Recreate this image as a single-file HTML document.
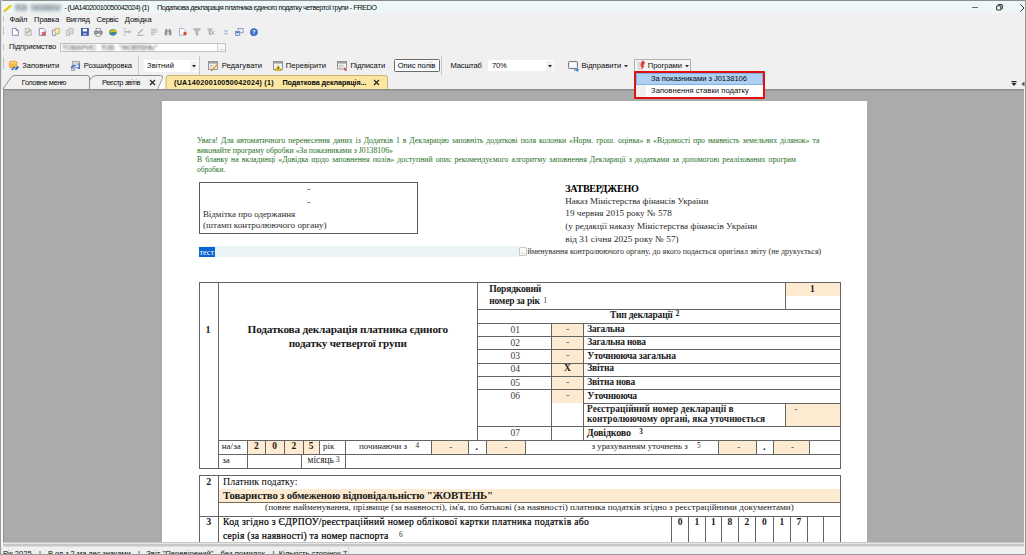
<!DOCTYPE html>
<html><head><meta charset="utf-8">
<style>
html,body{margin:0;padding:0;}
body{width:1026px;height:555px;overflow:hidden;position:relative;background:#f0f0f0;font-family:"Liberation Sans",sans-serif;color:#1e1e1e;}
.a{position:absolute;white-space:nowrap;}
.blur{filter:blur(1.4px);}
svg{position:absolute;overflow:visible}
</style></head>
<body>
<div class="a" style="left:0px;top:0px;width:1026px;height:555px;background:#f0f0f0"></div>
<div class="a" style="left:0px;top:0px;width:1026px;height:13px;background:#eef7f7"></div>
<div class="a" style="left:0px;top:0px;width:1026px;height:1px;background:#8c8c8c"></div>
<svg style="left:2px;top:2px" width="10" height="10" viewBox="0 0 10 10"><path d="M1.8 8.2 L8 2.8 L10 4 L3.8 9.6 Z" fill="#f0c808"/><path d="M1.6 9.9 L1.8 8.2 L3.8 9.6 Z" fill="#e0b000"/></svg>
<div class="a" style="left:14px;top:3.5px;width:13px;height:8px;background:#c8d2d6;border-radius:3px;filter:blur(1.4px)"></div>
<div class="a" style="left:30px;top:3.5px;width:31px;height:8px;background:#c8d2d6;border-radius:3px;filter:blur(1.4px)"></div>
<div class="a " style="left:15.00px;top:4.00px;font-family:'Liberation Sans',sans-serif;font-weight:bold;font-size:7.4px;line-height:7.4px;color:#9aa2a8;letter-spacing:-1.479px;filter:blur(1.1px);">ТОВ</div>
<div class="a " style="left:31.00px;top:4.00px;font-family:'Liberation Sans',sans-serif;font-weight:bold;font-size:7.4px;line-height:7.4px;color:#9aa2a8;letter-spacing:-1.727px;filter:blur(1.1px);">&quot;ЖОВТЕНЬ&quot;</div>
<div class="a " style="left:64.30px;top:4.00px;font-family:'Liberation Sans',sans-serif;font-weight:normal;font-size:7.4px;line-height:7.4px;color:#0a0a0a;letter-spacing:-0.596px;">- (UA14020010050042024) (1)</div>
<div class="a " style="left:157.00px;top:4.00px;font-family:'Liberation Sans',sans-serif;font-weight:normal;font-size:7.4px;line-height:7.4px;color:#0a0a0a;letter-spacing:-0.520px;">Податкова декларація платника єдиного податку четвертої групи - FREDO</div>
<div class="a" style="left:972px;top:6.5px;width:6px;height:1.2px;background:#6a6a6a"></div>
<svg style="left:996px;top:4px" width="7" height="7" viewBox="0 0 7 7"><rect x="0.6" y="1.8" width="4.2" height="4.2" rx="1" fill="none" stroke="#3a3a3a" stroke-width="1.1"/><path d="M2 1.6 Q2 0.6 3 0.6 H5.4 Q6.4 0.6 6.4 1.6 V4 Q6.4 5 5.4 5" fill="none" stroke="#3a3a3a" stroke-width="1.1"/></svg>
<svg style="left:1019px;top:3px" width="8" height="8" viewBox="0 0 8 8"><path d="M1.5 1.5 L5 5 L1.5 8.5" stroke="#333" stroke-width="1" fill="none"/></svg>
<div class="a" style="left:3px;top:16px;width:1px;height:6px;background:#c4c4c4"></div>
<div class="a " style="left:9.40px;top:16.00px;font-family:'Liberation Sans',sans-serif;font-weight:normal;font-size:7.6px;line-height:7.6px;color:#0a0a0a;letter-spacing:-0.196px;">Файл</div>
<div class="a " style="left:34.10px;top:16.00px;font-family:'Liberation Sans',sans-serif;font-weight:normal;font-size:7.6px;line-height:7.6px;color:#0a0a0a;letter-spacing:-0.129px;">Правка</div>
<div class="a " style="left:65.90px;top:16.00px;font-family:'Liberation Sans',sans-serif;font-weight:normal;font-size:7.6px;line-height:7.6px;color:#0a0a0a;letter-spacing:-0.184px;">Вигляд</div>
<div class="a " style="left:96.50px;top:16.00px;font-family:'Liberation Sans',sans-serif;font-weight:normal;font-size:7.6px;line-height:7.6px;color:#0a0a0a;letter-spacing:-0.278px;">Сервіс</div>
<div class="a " style="left:124.80px;top:16.00px;font-family:'Liberation Sans',sans-serif;font-weight:normal;font-size:7.6px;line-height:7.6px;color:#0a0a0a;letter-spacing:-0.063px;">Довідка</div>
<div class="a" style="left:3px;top:26px;width:1px;height:9px;background:#c4c4c4"></div>
<svg style="left:10.5px;top:27.5px" width="10" height="10" viewBox="0 0 10 10"><g transform="scale(0.86)" opacity="0.9"><path d="M1.5 0.5 H6 L8.5 3 V8.5 H1.5 Z" fill="#fff" stroke="#5d74a6"/><path d="M6 0.5 V3 H8.5" fill="#dfe6f2" stroke="#5d74a6"/></g></svg>
<svg style="left:23.5px;top:27.5px" width="10" height="10" viewBox="0 0 10 10"><g transform="scale(0.86)" opacity="0.9"><path d="M1.5 0.5 H6 L8.5 3 V8.5 H1.5 Z" fill="#e8e8e8" stroke="#a8a8a8"/><path d="M3 6 L8 1.5" stroke="#9a9a9a" stroke-width="1.5"/></g></svg>
<svg style="left:37.5px;top:27.5px" width="10" height="10" viewBox="0 0 10 10"><g transform="scale(0.86)" opacity="0.9"><path d="M1.5 0.5 H6 L8.5 3 V8.5 H1.5 Z" fill="#fff" stroke="#5d74a6"/><path d="M4.5 4.5 L8.5 8.5 M8.5 4.5 L4.5 8.5" stroke="#e02020" stroke-width="1.4"/></g></svg>
<svg style="left:51.5px;top:27.5px" width="10" height="10" viewBox="0 0 10 10"><g transform="scale(0.86)" opacity="0.9"><path d="M0.5 2.5 H4.5 V8.5 H0.5 Z" fill="#fff" stroke="#5d74a6"/><path d="M3.5 0.5 H8.5 V6.5 H3.5 Z" fill="#f7eab0" stroke="#b8a050"/></g></svg>
<svg style="left:65.5px;top:27.5px" width="10" height="10" viewBox="0 0 10 10"><g transform="scale(0.86)" opacity="0.9"><path d="M0.5 2.5 H4.5 V8.5 H0.5 Z" fill="#e6e6e6" stroke="#b0b0b0"/><path d="M3.5 0.5 H8.5 V6.5 H3.5 Z" fill="#dadada" stroke="#b0b0b0"/></g></svg>
<svg style="left:80.5px;top:27.5px" width="10" height="10" viewBox="0 0 10 10"><g transform="scale(0.86)" opacity="0.9"><rect x="0.5" y="0.5" width="8" height="8" fill="#2b4fb0" stroke="#1e3a8a"/><rect x="2" y="1" width="5" height="3" fill="#fff"/><rect x="2.5" y="6" width="4" height="2.5" fill="#9fb4e0"/></g></svg>
<svg style="left:93.5px;top:27.5px" width="10" height="10" viewBox="0 0 10 10"><g transform="scale(0.86)" opacity="0.9"><rect x="0.5" y="3.5" width="9" height="4" rx="1" fill="#8f9296" stroke="#6d7074"/><rect x="2.5" y="0.5" width="5" height="3" fill="#fff" stroke="#8a8a8a"/><rect x="2.5" y="6.5" width="5" height="3" fill="#fff" stroke="#8a8a8a"/></g></svg>
<svg style="left:108.5px;top:27.5px" width="10" height="10" viewBox="0 0 10 10"><g transform="scale(0.86)" opacity="0.9"><ellipse cx="4.5" cy="5" rx="4.5" ry="3.6" fill="#2a8a3a"/><path d="M0.8 4 Q4 1 8.5 3 L8 5 Q4 3.5 1 6 Z" fill="#f2c200"/><ellipse cx="4.5" cy="7" rx="3.5" ry="1.6" fill="#2d6fd0"/></g></svg>
<svg style="left:122.5px;top:27.5px" width="10" height="10" viewBox="0 0 10 10"><g transform="scale(0.86)" opacity="0.9"><path d="M1 1 H3 M1 4.5 H3 M1 8 H3 M3 4.5 H9" stroke="#a6a6a6" stroke-width="1.2"/><rect x="6" y="3" width="3" height="3" fill="#b6b6b6"/></g></svg>
<svg style="left:135.5px;top:27.5px" width="10" height="10" viewBox="0 0 10 10"><g transform="scale(0.86)" opacity="0.9"><path d="M1 8.5 H8.5" stroke="#a0a0a0" stroke-width="1.2"/><path d="M2.5 6.5 L8 1.5" stroke="#a8a8a8" stroke-width="1.6"/></g></svg>
<svg style="left:149.5px;top:27.5px" width="10" height="10" viewBox="0 0 10 10"><g transform="scale(0.86)" opacity="0.9"><path d="M1 1.5 H7 M1 3.5 H6 M1 5.5 H7 M1 7.5 H5" stroke="#ababab" stroke-width="1.1"/><path d="M6.5 3 L9 1 M6.5 3 L9 5" stroke="#a6a6a6" stroke-width="0.9"/></g></svg>
<svg style="left:163.5px;top:27.5px" width="10" height="10" viewBox="0 0 10 10"><g transform="scale(0.86)" opacity="0.9"><path d="M1 3 L2.5 0.8 H3.8 V8.5 H0.6 Z M8.4 3 L6.9 0.8 H5.6 V8.5 H8.8 Z" fill="#8a8a8a"/><rect x="3.5" y="3" width="2.4" height="2" fill="#9a9a9a"/></g></svg>
<svg style="left:178.5px;top:27.5px" width="10" height="10" viewBox="0 0 10 10"><g transform="scale(0.86)" opacity="0.9"><path d="M0.5 0.5 H5 L7.5 3 V8.5 H0.5 Z" fill="#fff" stroke="#8da0c0"/><circle cx="7" cy="6.5" r="2" fill="#e03020"/></g></svg>
<svg style="left:192.5px;top:27.5px" width="10" height="10" viewBox="0 0 10 10"><g transform="scale(0.86)" opacity="0.9"><path d="M0.5 1 H8.5 L5.5 4.5 V8.5 L3.5 7.5 V4.5 Z" fill="#bcbcbc" stroke="#8f8f8f" stroke-width="0.8"/></g></svg>
<svg style="left:206.5px;top:27.5px" width="10" height="10" viewBox="0 0 10 10"><g transform="scale(0.86)" opacity="0.9"><path d="M0.5 1 H6 L4 4 V8 L2.5 7 V4 Z" fill="#c4c4c4" stroke="#9a9a9a" stroke-width="0.8"/><path d="M5 3 L8.5 8 M8.5 3 L5 8" stroke="#9a9a9a" stroke-width="1"/></g></svg>
<svg style="left:221.5px;top:27.5px" width="10" height="10" viewBox="0 0 10 10"><g transform="scale(0.86)" opacity="0.9"><path d="M2.5 2.5 L4.5 4.5 L6.5 2.5 M2.5 5.5 L4.5 7.5 L6.5 5.5" fill="none" stroke="#5a80c8" stroke-width="1"/></g></svg>
<svg style="left:234.5px;top:27.5px" width="10" height="10" viewBox="0 0 10 10"><g transform="scale(0.86)" opacity="0.9"><rect x="3.5" y="0.5" width="6" height="5" fill="#e8eef6" stroke="#6f86b0" stroke-width="0.9"/><rect x="0.5" y="4" width="5" height="4.5" fill="#cfdcf0" stroke="#5a76b0" stroke-width="0.9"/><rect x="1.2" y="4.6" width="3.6" height="1.2" fill="#3a6fc8"/></g></svg>
<svg style="left:249.5px;top:27.5px" width="10" height="10" viewBox="0 0 10 10"><g transform="scale(0.86)" opacity="0.9"><circle cx="4.5" cy="4.8" r="4.2" fill="#2a64c8"/><circle cx="4.5" cy="4.8" r="4.2" fill="none" stroke="#1c4aa0" stroke-width="0.6"/><text x="4.5" y="7.3" font-size="6.5" font-weight="bold" text-anchor="middle" fill="#fff" font-family="Liberation Sans">?</text></g></svg>
<div class="a" style="left:3px;top:44px;width:1px;height:6px;background:#c4c4c4"></div>
<div class="a " style="left:8.90px;top:43.00px;font-family:'Liberation Sans',sans-serif;font-weight:normal;font-size:7.6px;line-height:7.6px;color:#0a0a0a;letter-spacing:-0.128px;">Підприємство</div>
<div class="a" style="left:60px;top:43px;width:166px;height:9px;background:#fff;border:1px solid #c3c3c3;box-sizing:border-box"></div>
<div class="a " style="left:62.00px;top:44.00px;font-family:'Liberation Sans',sans-serif;font-weight:bold;font-size:7.6px;line-height:7.6px;color:#8a8a8a;letter-spacing:-0.426px;filter:blur(0.9px);">ТОВАРИС</div>
<div class="a " style="left:100.50px;top:44.00px;font-family:'Liberation Sans',sans-serif;font-weight:bold;font-size:7.6px;line-height:7.6px;color:#8a8a8a;letter-spacing:-0.851px;filter:blur(0.9px);">ТОВ</div>
<div class="a " style="left:118.50px;top:44.00px;font-family:'Liberation Sans',sans-serif;font-weight:bold;font-size:7.6px;line-height:7.6px;color:#8a8a8a;letter-spacing:-0.828px;filter:blur(0.9px);">&quot;ЖОВТЕНЬ&quot;</div>
<div class="a" style="left:217px;top:44px;width:8px;height:7px;background:#f7f7f7;border-left:1px solid #d0d0d0;box-sizing:border-box"></div>
<div class="a " style="left:219.00px;top:45.00px;font-family:'Liberation Sans',sans-serif;font-weight:normal;font-size:6px;line-height:6px;color:#555;">...</div>
<div class="a" style="left:3px;top:57px;width:1px;height:12px;background:#c4c4c4"></div>
<svg style="left:8px;top:60px" width="12" height="12" viewBox="0 0 12 12"><rect x="1.3" y="1.3" width="7.6" height="6.4" rx="1.2" fill="#f4b841" stroke="#ec9a2c" stroke-width="0.7"/><rect x="2" y="2" width="6" height="1.4" fill="#f9d880"/><path d="M3 9.5 L6.2 6.2 L7.4 7.2 L4.6 10.6 Z" fill="#2f7fd8"/><path d="M6.8 9.2 L9.6 6 L11.2 7 L8.2 10.2 Z" fill="#1f62b8"/></svg>
<div class="a " style="left:22.20px;top:62.00px;font-family:'Liberation Sans',sans-serif;font-weight:normal;font-size:7.6px;line-height:7.6px;color:#0a0a0a;letter-spacing:-0.030px;">Заповнити</div>
<svg style="left:70px;top:60px" width="12" height="12" viewBox="0 0 12 12"><rect x="2.3" y="1.3" width="7.4" height="6" fill="#d6d6d6" stroke="#8e8e8e" stroke-width="0.7"/><path d="M1.5 7.8 Q1.8 5.2 5.6 5.6" stroke="#3d72d8" stroke-width="1.5" fill="none"/><path d="M8.3 3.3 Q10 4.8 9.4 8.3 L7.4 8.3" stroke="#3d72d8" stroke-width="1.3" fill="none"/><rect x="1.4" y="8.2" width="3.6" height="2.4" fill="#c4cad4" stroke="#7a8090" stroke-width="0.5"/></svg>
<div class="a " style="left:83.80px;top:62.00px;font-family:'Liberation Sans',sans-serif;font-weight:normal;font-size:7.6px;line-height:7.6px;color:#0a0a0a;letter-spacing:-0.088px;">Розшифровка</div>
<div class="a" style="left:138px;top:56px;width:1px;height:19px;background:#c8c8c8"></div>
<div class="a" style="left:144px;top:60px;width:54px;height:12px;background:#fff"></div>
<div class="a " style="left:147.00px;top:62.00px;font-family:'Liberation Sans',sans-serif;font-weight:normal;font-size:7.6px;line-height:7.6px;color:#0a0a0a;letter-spacing:0.074px;">Звітний</div>
<div class="a" style="left:190px;top:61px;width:7px;height:10px;background:#f2f2f2"></div>
<svg style="left:191.5px;top:65px" width="4" height="3" viewBox="0 0 4 3"><path d="M0 0 H4 L2 2.5 Z" fill="#222"/></svg>
<div class="a" style="left:199px;top:56px;width:1px;height:19px;background:#c8c8c8"></div>
<svg style="left:208px;top:61px" width="11" height="10" viewBox="0 0 11 10"><rect x="0.5" y="0.5" width="9" height="8" fill="#f2f2f2" stroke="#8a8a8a" stroke-width="0.9"/><rect x="1" y="1" width="8" height="1.6" fill="#a0a0a0"/><path d="M1.8 4.5 H5.5 M1.8 6.3 H4.5" stroke="#b0b0b0" stroke-width="0.8"/><path d="M3.5 9.5 L9.5 3.5" stroke="#e39a2a" stroke-width="1.6"/><path d="M3 10 L3.6 8.6 L4.4 9.4 Z" fill="#555"/></svg>
<div class="a " style="left:221.70px;top:62.00px;font-family:'Liberation Sans',sans-serif;font-weight:normal;font-size:7.6px;line-height:7.6px;color:#0a0a0a;letter-spacing:0.073px;">Редагувати</div>
<svg style="left:273px;top:61px" width="11" height="10" viewBox="0 0 11 10"><rect x="0.5" y="0.5" width="9" height="8" fill="#f4f4f4" stroke="#8a8a8a" stroke-width="0.9"/><rect x="1" y="1" width="8" height="1.6" fill="#a0a0a0"/><path d="M5.2 4.5 L8.2 9.6 H2.2 Z" fill="#f0c000" stroke="#a88400" stroke-width="0.5"/><rect x="4.8" y="6" width="0.8" height="2" fill="#333"/></svg>
<div class="a " style="left:285.80px;top:62.00px;font-family:'Liberation Sans',sans-serif;font-weight:normal;font-size:7.6px;line-height:7.6px;color:#0a0a0a;letter-spacing:0.023px;">Перевірити</div>
<svg style="left:337px;top:61px" width="11" height="10" viewBox="0 0 11 10"><rect x="0.5" y="0.5" width="9" height="7.5" fill="#f4f4f4" stroke="#8a8a8a" stroke-width="0.9"/><rect x="1" y="1" width="8" height="1.6" fill="#a0a0a0"/><path d="M1.8 4.3 H6.5 M1.8 6 H5.5" stroke="#b0b0b0" stroke-width="0.8"/><path d="M6.5 5.5 L10 9.8 L7.8 9.8 Z" fill="#d42020"/></svg>
<div class="a " style="left:350.40px;top:62.00px;font-family:'Liberation Sans',sans-serif;font-weight:normal;font-size:7.6px;line-height:7.6px;color:#0a0a0a;letter-spacing:-0.093px;">Підписати</div>
<div class="a" style="left:394px;top:59px;width:46px;height:13px;background:#f4f8fb;border:1px solid #6a6a6a;border-radius:1.5px;box-sizing:border-box;box-shadow:inset 0 0 0 1px #fff"></div>
<div class="a " style="left:397.80px;top:62.00px;font-family:'Liberation Sans',sans-serif;font-weight:normal;font-size:7.6px;line-height:7.6px;color:#0a0a0a;letter-spacing:-0.102px;">Опис полів</div>
<div class="a" style="left:441px;top:56px;width:1px;height:19px;background:#c8c8c8"></div>
<div class="a " style="left:450.60px;top:62.00px;font-family:'Liberation Sans',sans-serif;font-weight:normal;font-size:7.6px;line-height:7.6px;color:#0a0a0a;letter-spacing:-0.188px;">Масштаб</div>
<div class="a" style="left:488px;top:60px;width:66px;height:11px;background:#fff"></div>
<div class="a " style="left:492.00px;top:62.00px;font-family:'Liberation Sans',sans-serif;font-weight:normal;font-size:7.6px;line-height:7.6px;color:#0a0a0a;letter-spacing:-0.237px;">70%</div>
<div class="a" style="left:546px;top:61px;width:7px;height:10px;background:#f2f2f2"></div>
<svg style="left:547.5px;top:65px" width="4" height="3" viewBox="0 0 4 3"><path d="M0 0 H4 L2 2.5 Z" fill="#222"/></svg>
<svg style="left:568px;top:61px" width="11" height="10" viewBox="0 0 11 10"><rect x="0.5" y="0.5" width="9" height="7" rx="0.8" fill="#e6e9ee" stroke="#6a6f78" stroke-width="0.9"/><rect x="1.8" y="1.8" width="6.4" height="4.4" fill="#fbfbfb"/><path d="M6 9 H10 M8.8 7.6 L10.2 9 L8.8 10.4" stroke="#2a6fd0" stroke-width="1.2" fill="none"/></svg>
<div class="a " style="left:581.40px;top:62.00px;font-family:'Liberation Sans',sans-serif;font-weight:normal;font-size:7.6px;line-height:7.6px;color:#0a0a0a;letter-spacing:0.003px;">Відправити</div>
<svg style="left:624px;top:65px" width="5" height="3" viewBox="0 0 5 3"><path d="M0 0 H4 L2 2.5 Z" fill="#333"/></svg>
<div class="a" style="left:634px;top:59px;width:57px;height:13px;background:#f4f4f4;border:1px solid #b0b0b0;box-sizing:border-box"></div>
<svg style="left:637px;top:60px" width="9" height="11" viewBox="0 0 9 11"><rect x="0.5" y="1.5" width="3" height="8" fill="#d8d8d8"/><path d="M5.5 0.5 Q8.5 1.5 7.5 4 L6 5.5 L7.5 6 L4 10.5 L4.8 6.8 L3.5 6.3 Q3 3 5.5 0.5 Z" fill="#e23a3a"/></svg>
<div class="a " style="left:647.80px;top:62.00px;font-family:'Liberation Sans',sans-serif;font-weight:normal;font-size:7.6px;line-height:7.6px;color:#0a0a0a;letter-spacing:-0.052px;">Програми</div>
<svg style="left:685px;top:65px" width="5" height="3" viewBox="0 0 5 3"><path d="M0 0 H4 L2 2.5 Z" fill="#333"/></svg>
<svg style="left:0px;top:0px" width="1026" height="100" viewBox="0 0 1026 100"><path d="M2.5 89.5 L11 77.5 Q12.5 75.5 15 75.5 H87 Q89.5 75.5 89.5 78 V89.5" fill="#f0f0f0" stroke="#8e8e8e" stroke-width="1"/><path d="M89.5 81 Q91.5 75.5 97 75.5 H160.5 Q163.5 75.5 162.5 78.5 L157.5 89.5" fill="#f0f0f0" stroke="#8e8e8e" stroke-width="1"/><path d="M158 89.5 L163 78.5 L166 76 V89.5 Z" fill="#fafafa"/><path d="M166 89.5 V78 Q166 75.5 169 75.5 H385 Q387.5 75.5 387.5 78 V89.5 Z" fill="#fbe7a2" stroke="#c9b273" stroke-width="1"/></svg>
<div class="a " style="left:21.80px;top:79.00px;font-family:'Liberation Sans',sans-serif;font-weight:normal;font-size:7.3px;line-height:7.3px;color:#0a0a0a;letter-spacing:-0.346px;">Головне меню</div>
<div class="a " style="left:102.00px;top:79.00px;font-family:'Liberation Sans',sans-serif;font-weight:normal;font-size:7.3px;line-height:7.3px;color:#0a0a0a;letter-spacing:-0.393px;">Реєстр звітів</div>
<svg style="left:149px;top:79px" width="7" height="7" viewBox="0 0 7 7"><path d="M1 1 L6 6 M6 1 L1 6" stroke="#222" stroke-width="1.1"/></svg>
<div class="a " style="left:174.00px;top:79.00px;font-family:'Liberation Sans',sans-serif;font-weight:bold;font-size:7.2px;line-height:7.2px;color:#0a0a0a;letter-spacing:0.237px;">(UA14020010050042024) (1)</div>
<div class="a " style="left:282.50px;top:79.00px;font-family:'Liberation Sans',sans-serif;font-weight:bold;font-size:7.2px;line-height:7.2px;color:#0a0a0a;letter-spacing:-0.069px;">Податкова декларація...</div>
<svg style="left:373px;top:79px" width="7" height="7" viewBox="0 0 7 7"><path d="M1 1 L6 6 M6 1 L1 6" stroke="#222" stroke-width="1.1"/></svg>
<svg style="left:1011px;top:81px" width="6" height="6" viewBox="0 0 6 6"><rect x="0.5" y="0" width="5" height="1.2" fill="#222"/><path d="M0.5 2 H5.5 L3 5 Z" fill="#222"/></svg>
<svg style="left:1021px;top:81px" width="4" height="6" viewBox="0 0 4 6"><path d="M3.5 0.5 L0.5 3 L3.5 5.5 Z" fill="#555"/></svg>
<div class="a" style="left:2px;top:89px;width:1022px;height:453px;background:#ababab"></div>
<div class="a" style="left:2px;top:89px;width:1022px;height:1px;background:#8c8c8c"></div>
<div class="a" style="left:2px;top:90px;width:1022px;height:1px;background:#a0a0a0"></div>
<div class="a" style="left:162px;top:101px;width:705px;height:441px;background:#fff"></div>
<div class="a" style="left:197px;top:137.00px;width:622.4px;font-family:'Liberation Serif',serif;font-weight:normal;font-size:7.8px;line-height:7.8px;color:#1c701c;text-align:justify;text-align-last:justify;white-space:normal">Увага! Для автоматичного перенесення даних із Додатків 1 в Декларацію заповніть додаткові поля колонки «Норм. грош. оцінка» в «Відомості про наявність земельних ділянок» та</div>
<div class="a " style="left:197.00px;top:146.82px;font-family:'Liberation Serif',serif;font-weight:normal;font-size:7.81px;line-height:7.81px;color:#1c701c;letter-spacing:0.001px;">виконайте програму обробки «За показниками з J0138106»</div>
<div class="a" style="left:197px;top:155.80px;width:599px;font-family:'Liberation Serif',serif;font-weight:normal;font-size:7.8px;line-height:7.8px;color:#1c701c;text-align:justify;text-align-last:justify;white-space:normal">В бланку на вкладинці «Довідка щодо заповнення полів» доступний опис рекомендуємого алгоритму заповнення Декларації з додатками за допомогою реалізованих програм</div>
<div class="a " style="left:197.00px;top:165.65px;font-family:'Liberation Serif',serif;font-weight:normal;font-size:7.5px;line-height:7.5px;color:#1c701c;letter-spacing:-0.002px;">обробки.</div>
<div class="a" style="left:199px;top:182px;width:219px;height:52px;border:1px solid #5a5a5a;box-sizing:border-box"></div>
<div class="a " style="left:307.30px;top:184.82px;font-family:'Liberation Serif',serif;font-weight:normal;font-size:9px;line-height:9px;color:#222;">-</div>
<div class="a " style="left:307.30px;top:198.12px;font-family:'Liberation Serif',serif;font-weight:normal;font-size:9px;line-height:9px;color:#222;">-</div>
<div class="a " style="left:202.90px;top:209.85px;font-family:'Liberation Serif',serif;font-weight:normal;font-size:8.94px;line-height:8.94px;color:#2b2b2b;letter-spacing:-0.002px;">Відмітка про одержання</div>
<div class="a " style="left:202.90px;top:221.48px;font-family:'Liberation Serif',serif;font-weight:normal;font-size:9.09px;line-height:9.09px;color:#2b2b2b;letter-spacing:-0.002px;">(штамп контролюючого органу)</div>
<div class="a " style="left:565.30px;top:184.07px;font-family:'Liberation Serif',serif;font-weight:bold;font-size:10.07px;line-height:10.07px;color:#000;letter-spacing:-0.263px;">ЗАТВЕРДЖЕНО</div>
<div class="a " style="left:565.30px;top:196.71px;font-family:'Liberation Serif',serif;font-weight:normal;font-size:9.02px;line-height:9.02px;color:#2b2b2b;letter-spacing:0.002px;">Наказ Міністерства фінансів України</div>
<div class="a " style="left:565.30px;top:209.14px;font-family:'Liberation Serif',serif;font-weight:normal;font-size:9.2px;line-height:9.2px;color:#2b2b2b;letter-spacing:-0.001px;">19 червня 2015 року № 578</div>
<div class="a " style="left:565.30px;top:221.74px;font-family:'Liberation Serif',serif;font-weight:normal;font-size:9.19px;line-height:9.19px;color:#2b2b2b;letter-spacing:-0.001px;">(у редакції наказу Міністерства фінансів України</div>
<div class="a " style="left:565.30px;top:234.60px;font-family:'Liberation Serif',serif;font-weight:normal;font-size:9.28px;line-height:9.28px;color:#2b2b2b;letter-spacing:0.001px;">від 31 січня 2025 року № 57)</div>
<div class="a" style="left:199px;top:246px;width:320px;height:11px;background:#eaf4f4"></div>
<div class="a" style="left:199px;top:247px;width:16px;height:10px;background:#0a64d2"></div>
<div class="a " style="left:199.50px;top:248.59px;font-family:'Liberation Serif',serif;font-weight:normal;font-size:8.12px;line-height:8.12px;color:#fff;letter-spacing:-0.002px;">тест</div>
<div class="a" style="left:519px;top:247px;width:8px;height:9px;background:#fafafa;border:1px solid #c8c8c8;box-sizing:border-box;border-radius:1px"></div>
<div class="a " style="left:520.50px;top:250.00px;font-family:'Liberation Sans',sans-serif;font-weight:normal;font-size:5.5px;line-height:5.5px;color:#666;">...</div>
<div class="a " style="left:527.40px;top:247.74px;font-family:'Liberation Serif',serif;font-weight:normal;font-size:8.01px;line-height:8.01px;color:#2b2b2b;letter-spacing:0.002px;">йменування контролюючого органу, до якого подається оригінал звіту (не друкується)</div>
<div class="a" style="left:786px;top:283px;width:54px;height:13px;background:#fdebd1"></div>
<div class="a" style="left:552px;top:324px;width:31px;height:12px;background:#fdebd1"></div>
<div class="a" style="left:552px;top:337px;width:31px;height:12px;background:#fdebd1"></div>
<div class="a" style="left:552px;top:350px;width:31px;height:13px;background:#fdebd1"></div>
<div class="a" style="left:552px;top:364px;width:31px;height:12px;background:#fdebd1"></div>
<div class="a" style="left:552px;top:377px;width:31px;height:12px;background:#fdebd1"></div>
<div class="a" style="left:552px;top:390px;width:31px;height:13px;background:#fdebd1"></div>
<div class="a" style="left:786px;top:404px;width:54px;height:22px;background:#fdebd1"></div>
<div class="a" style="left:248px;top:441px;width:17px;height:13px;background:#fdebd1"></div>
<div class="a" style="left:266px;top:441px;width:18px;height:13px;background:#fdebd1"></div>
<div class="a" style="left:285px;top:441px;width:18px;height:13px;background:#fdebd1"></div>
<div class="a" style="left:304px;top:441px;width:15px;height:13px;background:#fdebd1"></div>
<div class="a" style="left:432px;top:441px;width:36px;height:13px;background:#fdebd1"></div>
<div class="a" style="left:487px;top:441px;width:38px;height:13px;background:#fdebd1"></div>
<div class="a" style="left:719px;top:441px;width:37px;height:13px;background:#fdebd1"></div>
<div class="a" style="left:774px;top:441px;width:35px;height:13px;background:#fdebd1"></div>
<div class="a" style="left:219px;top:489px;width:621px;height:13px;background:#fdebd1"></div>
<div class="a" style="left:199px;top:282px;width:642px;height:1px;background:#646464"></div>
<div class="a" style="left:199px;top:468px;width:642px;height:1px;background:#646464"></div>
<div class="a" style="left:199px;top:282px;width:1px;height:187px;background:#646464"></div>
<div class="a" style="left:840px;top:282px;width:1px;height:187px;background:#646464"></div>
<div class="a" style="left:218px;top:282px;width:1px;height:186px;background:#646464"></div>
<div class="a" style="left:477px;top:282px;width:1px;height:158px;background:#646464"></div>
<div class="a" style="left:477px;top:309px;width:363px;height:1px;background:#646464"></div>
<div class="a" style="left:477px;top:323px;width:363px;height:1px;background:#646464"></div>
<div class="a" style="left:477px;top:336px;width:363px;height:1px;background:#646464"></div>
<div class="a" style="left:477px;top:349px;width:363px;height:1px;background:#646464"></div>
<div class="a" style="left:477px;top:363px;width:363px;height:1px;background:#646464"></div>
<div class="a" style="left:477px;top:376px;width:363px;height:1px;background:#646464"></div>
<div class="a" style="left:477px;top:389px;width:363px;height:1px;background:#646464"></div>
<div class="a" style="left:477px;top:426px;width:363px;height:1px;background:#646464"></div>
<div class="a" style="left:583px;top:403px;width:257px;height:1px;background:#646464"></div>
<div class="a" style="left:785px;top:282px;width:1px;height:27px;background:#646464"></div>
<div class="a" style="left:551px;top:323px;width:1px;height:117px;background:#646464"></div>
<div class="a" style="left:583px;top:323px;width:1px;height:117px;background:#646464"></div>
<div class="a" style="left:785px;top:403px;width:1px;height:23px;background:#646464"></div>
<div class="a" style="left:218px;top:440px;width:622px;height:1px;background:#646464"></div>
<div class="a" style="left:218px;top:454px;width:622px;height:1px;background:#646464"></div>
<div class="a" style="left:247px;top:440px;width:1px;height:28px;background:#646464"></div>
<div class="a" style="left:265px;top:440px;width:1px;height:14px;background:#646464"></div>
<div class="a" style="left:284px;top:440px;width:1px;height:14px;background:#646464"></div>
<div class="a" style="left:303px;top:440px;width:1px;height:14px;background:#646464"></div>
<div class="a" style="left:319px;top:440px;width:1px;height:14px;background:#646464"></div>
<div class="a" style="left:468px;top:440px;width:1px;height:14px;background:#646464"></div>
<div class="a" style="left:486px;top:440px;width:1px;height:14px;background:#646464"></div>
<div class="a" style="left:525px;top:440px;width:1px;height:14px;background:#646464"></div>
<div class="a" style="left:718px;top:440px;width:1px;height:14px;background:#646464"></div>
<div class="a" style="left:756px;top:440px;width:1px;height:14px;background:#646464"></div>
<div class="a" style="left:773px;top:440px;width:1px;height:14px;background:#646464"></div>
<div class="a" style="left:809px;top:440px;width:1px;height:14px;background:#646464"></div>
<div class="a" style="left:345px;top:440px;width:1px;height:28px;background:#646464"></div>
<div class="a" style="left:431px;top:440px;width:1px;height:14px;background:#646464"></div>
<div class="a" style="left:301px;top:454px;width:1px;height:14px;background:#646464"></div>
<div class="a " style="left:205.50px;top:325.20px;font-family:'Liberation Serif',serif;font-weight:bold;font-size:10px;line-height:10px;color:#1a1a1a;">1</div>
<div class="a " style="left:247.55px;top:324.45px;font-family:'Liberation Serif',serif;font-weight:bold;font-size:11.32px;line-height:11.32px;color:#1a1a1a;letter-spacing:-0.217px;">Податкова декларація платника єдиного</div>
<div class="a " style="left:288.65px;top:338.41px;font-family:'Liberation Serif',serif;font-weight:bold;font-size:11.17px;line-height:11.17px;color:#1a1a1a;letter-spacing:-0.204px;">податку четвертої групи</div>
<div class="a " style="left:489.20px;top:284.45px;font-family:'Liberation Serif',serif;font-weight:bold;font-size:9.64px;line-height:9.64px;color:#1a1a1a;letter-spacing:-0.209px;">Порядковий</div>
<div class="a " style="left:489.20px;top:297.42px;font-family:'Liberation Serif',serif;font-weight:bold;font-size:9.48px;line-height:9.48px;color:#1a1a1a;letter-spacing:-0.168px;">номер за рік</div>
<div class="a " style="left:543.50px;top:297.98px;font-family:'Liberation Serif',serif;font-weight:normal;font-size:7.2px;line-height:7.2px;color:#2b2b2b;">1</div>
<div class="a " style="left:810.12px;top:284.61px;font-family:'Liberation Serif',serif;font-weight:bold;font-size:9.5px;line-height:9.5px;color:#1a1a1a;">1</div>
<div class="a " style="left:610.00px;top:310.90px;font-family:'Liberation Serif',serif;font-weight:bold;font-size:9.52px;line-height:9.52px;color:#1a1a1a;letter-spacing:-0.180px;">Тип декларації</div>
<div class="a " style="left:675.80px;top:311.48px;font-family:'Liberation Serif',serif;font-weight:bold;font-size:7.2px;line-height:7.2px;color:#1a1a1a;">2</div>
<div class="a " style="left:510.40px;top:324.57px;font-family:'Liberation Serif',serif;font-weight:normal;font-size:9.6px;line-height:9.6px;color:#444;">01</div>
<div class="a " style="left:587.20px;top:324.68px;font-family:'Liberation Serif',serif;font-weight:bold;font-size:9.33px;line-height:9.33px;color:#1a1a1a;letter-spacing:-0.185px;">Загальна</div>
<div class="a " style="left:566.30px;top:324.82px;font-family:'Liberation Serif',serif;font-weight:normal;font-size:9px;line-height:9px;color:#333;">-</div>
<div class="a " style="left:510.40px;top:337.77px;font-family:'Liberation Serif',serif;font-weight:normal;font-size:9.6px;line-height:9.6px;color:#444;">02</div>
<div class="a " style="left:587.20px;top:337.86px;font-family:'Liberation Serif',serif;font-weight:bold;font-size:9.39px;line-height:9.39px;color:#1a1a1a;letter-spacing:-0.178px;">Загальна нова</div>
<div class="a " style="left:566.30px;top:338.02px;font-family:'Liberation Serif',serif;font-weight:normal;font-size:9px;line-height:9px;color:#333;">-</div>
<div class="a " style="left:510.40px;top:350.97px;font-family:'Liberation Serif',serif;font-weight:normal;font-size:9.6px;line-height:9.6px;color:#444;">03</div>
<div class="a " style="left:587.20px;top:350.99px;font-family:'Liberation Serif',serif;font-weight:bold;font-size:9.54px;line-height:9.54px;color:#1a1a1a;letter-spacing:-0.198px;">Уточнююча загальна</div>
<div class="a " style="left:566.30px;top:351.22px;font-family:'Liberation Serif',serif;font-weight:normal;font-size:9px;line-height:9px;color:#333;">-</div>
<div class="a " style="left:510.40px;top:364.27px;font-family:'Liberation Serif',serif;font-weight:normal;font-size:9.6px;line-height:9.6px;color:#444;">04</div>
<div class="a " style="left:587.20px;top:364.30px;font-family:'Liberation Serif',serif;font-weight:bold;font-size:9.53px;line-height:9.53px;color:#1a1a1a;letter-spacing:-0.177px;">Звітна</div>
<div class="a " style="left:564.07px;top:364.31px;font-family:'Liberation Serif',serif;font-weight:bold;font-size:9.5px;line-height:9.5px;color:#1a1a1a;">X</div>
<div class="a " style="left:510.40px;top:377.67px;font-family:'Liberation Serif',serif;font-weight:normal;font-size:9.6px;line-height:9.6px;color:#444;">05</div>
<div class="a " style="left:587.20px;top:377.72px;font-family:'Liberation Serif',serif;font-weight:bold;font-size:9.48px;line-height:9.48px;color:#1a1a1a;letter-spacing:-0.174px;">Звітна нова</div>
<div class="a " style="left:566.30px;top:377.92px;font-family:'Liberation Serif',serif;font-weight:normal;font-size:9px;line-height:9px;color:#333;">-</div>
<div class="a " style="left:510.40px;top:390.87px;font-family:'Liberation Serif',serif;font-weight:normal;font-size:9.6px;line-height:9.6px;color:#444;">06</div>
<div class="a " style="left:587.20px;top:390.86px;font-family:'Liberation Serif',serif;font-weight:bold;font-size:9.63px;line-height:9.63px;color:#1a1a1a;letter-spacing:-0.224px;">Уточнююча</div>
<div class="a " style="left:566.30px;top:391.12px;font-family:'Liberation Serif',serif;font-weight:normal;font-size:9px;line-height:9px;color:#333;">-</div>
<div class="a " style="left:510.40px;top:428.07px;font-family:'Liberation Serif',serif;font-weight:normal;font-size:9.6px;line-height:9.6px;color:#444;">07</div>
<div class="a " style="left:587.00px;top:404.65px;font-family:'Liberation Serif',serif;font-weight:bold;font-size:9.4px;line-height:9.4px;color:#1a1a1a;letter-spacing:0.059px;">Реєстраційний номер декларації в</div>
<div class="a " style="left:587.00px;top:415.15px;font-family:'Liberation Serif',serif;font-weight:bold;font-size:9.4px;line-height:9.4px;color:#1a1a1a;letter-spacing:0.068px;">контролюючому органі, яка уточнюється</div>
<div class="a " style="left:794.30px;top:404.92px;font-family:'Liberation Serif',serif;font-weight:normal;font-size:9px;line-height:9px;color:#333;">-</div>
<div class="a " style="left:586.80px;top:427.88px;font-family:'Liberation Serif',serif;font-weight:bold;font-size:10.04px;line-height:10.04px;color:#1a1a1a;letter-spacing:-0.196px;">Довідково</div>
<div class="a " style="left:639.30px;top:428.98px;font-family:'Liberation Serif',serif;font-weight:bold;font-size:7.2px;line-height:7.2px;color:#1a1a1a;">3</div>
<div class="a " style="left:221.80px;top:442.21px;font-family:'Liberation Serif',serif;font-weight:normal;font-size:9.02px;line-height:9.02px;color:#222;letter-spacing:-0.001px;">на/за</div>
<div class="a " style="left:253.93px;top:441.51px;font-family:'Liberation Serif',serif;font-weight:bold;font-size:9.5px;line-height:9.5px;color:#1a1a1a;">2</div>
<div class="a " style="left:272.32px;top:441.51px;font-family:'Liberation Serif',serif;font-weight:bold;font-size:9.5px;line-height:9.5px;color:#1a1a1a;">0</div>
<div class="a " style="left:291.43px;top:441.51px;font-family:'Liberation Serif',serif;font-weight:bold;font-size:9.5px;line-height:9.5px;color:#1a1a1a;">2</div>
<div class="a " style="left:308.73px;top:441.51px;font-family:'Liberation Serif',serif;font-weight:bold;font-size:9.5px;line-height:9.5px;color:#1a1a1a;">5</div>
<div class="a " style="left:323.00px;top:442.21px;font-family:'Liberation Serif',serif;font-weight:normal;font-size:9.02px;line-height:9.02px;color:#222;letter-spacing:0.001px;">рік</div>
<div class="a " style="left:359.00px;top:442.06px;font-family:'Liberation Serif',serif;font-weight:normal;font-size:8.9px;line-height:8.9px;color:#222;letter-spacing:-0.002px;">починаючи з</div>
<div class="a " style="left:415.50px;top:443.18px;font-family:'Liberation Serif',serif;font-weight:normal;font-size:7.2px;line-height:7.2px;color:#222;">4</div>
<div class="a " style="left:449.20px;top:442.72px;font-family:'Liberation Serif',serif;font-weight:normal;font-size:9px;line-height:9px;color:#333;">-</div>
<div class="a " style="left:475.55px;top:442.30px;font-family:'Liberation Serif',serif;font-weight:bold;font-size:10px;line-height:10px;color:#111;">.</div>
<div class="a " style="left:504.50px;top:442.72px;font-family:'Liberation Serif',serif;font-weight:normal;font-size:9px;line-height:9px;color:#333;">-</div>
<div class="a " style="left:591.60px;top:441.89px;font-family:'Liberation Serif',serif;font-weight:normal;font-size:8.84px;line-height:8.84px;color:#222;letter-spacing:-0.000px;">з урахуванням уточнень з</div>
<div class="a " style="left:697.00px;top:442.88px;font-family:'Liberation Serif',serif;font-weight:normal;font-size:7.2px;line-height:7.2px;color:#222;">5</div>
<div class="a " style="left:737.20px;top:442.62px;font-family:'Liberation Serif',serif;font-weight:normal;font-size:9px;line-height:9px;color:#333;">-</div>
<div class="a " style="left:762.95px;top:442.20px;font-family:'Liberation Serif',serif;font-weight:bold;font-size:10px;line-height:10px;color:#111;">.</div>
<div class="a " style="left:791.10px;top:442.62px;font-family:'Liberation Serif',serif;font-weight:normal;font-size:9px;line-height:9px;color:#333;">-</div>
<div class="a " style="left:222.30px;top:456.29px;font-family:'Liberation Serif',serif;font-weight:normal;font-size:9.06px;line-height:9.06px;color:#222;letter-spacing:0.000px;">за</div>
<div class="a " style="left:307.60px;top:456.19px;font-family:'Liberation Serif',serif;font-weight:normal;font-size:9.3px;line-height:9.3px;color:#222;letter-spacing:0.001px;">місяць</div>
<div class="a " style="left:336.00px;top:456.78px;font-family:'Liberation Serif',serif;font-weight:normal;font-size:7.2px;line-height:7.2px;color:#222;">3</div>
<div class="a" style="left:199px;top:475px;width:642px;height:1px;background:#646464"></div>
<div class="a" style="left:199px;top:475px;width:1px;height:70px;background:#646464"></div>
<div class="a" style="left:840px;top:475px;width:1px;height:70px;background:#646464"></div>
<div class="a" style="left:218px;top:475px;width:1px;height:70px;background:#646464"></div>
<div class="a" style="left:219px;top:502px;width:621px;height:1px;background:#7a6a5a"></div>
<div class="a" style="left:199px;top:516px;width:642px;height:1px;background:#646464"></div>
<div class="a" style="left:671px;top:516px;width:1px;height:29px;background:#646464"></div>
<div class="a" style="left:688px;top:516px;width:1px;height:29px;background:#646464"></div>
<div class="a" style="left:705px;top:516px;width:1px;height:29px;background:#646464"></div>
<div class="a" style="left:721px;top:516px;width:1px;height:29px;background:#646464"></div>
<div class="a" style="left:738px;top:516px;width:1px;height:29px;background:#646464"></div>
<div class="a" style="left:755px;top:516px;width:1px;height:29px;background:#646464"></div>
<div class="a" style="left:773px;top:516px;width:1px;height:29px;background:#646464"></div>
<div class="a" style="left:790px;top:516px;width:1px;height:29px;background:#646464"></div>
<div class="a" style="left:807px;top:516px;width:1px;height:29px;background:#646464"></div>
<div class="a" style="left:823px;top:516px;width:1px;height:29px;background:#646464"></div>
<div class="a " style="left:206.30px;top:477.10px;font-family:'Liberation Serif',serif;font-weight:bold;font-size:10px;line-height:10px;color:#1a1a1a;">2</div>
<div class="a " style="left:206.20px;top:517.30px;font-family:'Liberation Serif',serif;font-weight:bold;font-size:10px;line-height:10px;color:#1a1a1a;">3</div>
<div class="a " style="left:223.00px;top:477.22px;font-family:'Liberation Serif',serif;font-weight:normal;font-size:9.95px;line-height:9.95px;color:#000;letter-spacing:-0.001px;">Платник податку:</div>
<div class="a " style="left:223.00px;top:490.24px;font-family:'Liberation Serif',serif;font-weight:bold;font-size:10.85px;line-height:10.85px;color:#1a1a1a;letter-spacing:-0.218px;">Товариство з обмеженою відповідальністю &quot;ЖОВТЕНЬ&quot;</div>
<div class="a " style="left:265.10px;top:503.37px;font-family:'Liberation Serif',serif;font-weight:normal;font-size:9.13px;line-height:9.13px;color:#222;letter-spacing:0.000px;">(повне найменування, прізвище (за наявності), ім&#x27;я, по батькові (за наявності) платника податків згідно з реєстраційними документами)</div>
<div class="a " style="left:223.00px;top:517.44px;font-family:'Liberation Serif',serif;font-weight:normal;font-size:9.67px;line-height:9.67px;color:#000;letter-spacing:0.283px;-webkit-text-stroke:0.2px #000;">Код згідно з ЄДРПОУ/реєстраційний номер облікової картки платника податків або</div>
<div class="a " style="left:223.00px;top:531.35px;font-family:'Liberation Serif',serif;font-weight:normal;font-size:9.64px;line-height:9.64px;color:#000;letter-spacing:0.216px;-webkit-text-stroke:0.2px #000;">серія (за наявності) та номер паспорта</div>
<div class="a " style="left:399.00px;top:531.98px;font-family:'Liberation Serif',serif;font-weight:normal;font-size:7.2px;line-height:7.2px;color:#2b2b2b;">6</div>
<div class="a " style="left:677.83px;top:518.41px;font-family:'Liberation Serif',serif;font-weight:bold;font-size:9.5px;line-height:9.5px;color:#1a1a1a;">0</div>
<div class="a " style="left:694.52px;top:518.41px;font-family:'Liberation Serif',serif;font-weight:bold;font-size:9.5px;line-height:9.5px;color:#1a1a1a;">1</div>
<div class="a " style="left:710.92px;top:518.41px;font-family:'Liberation Serif',serif;font-weight:bold;font-size:9.5px;line-height:9.5px;color:#1a1a1a;">1</div>
<div class="a " style="left:727.52px;top:518.41px;font-family:'Liberation Serif',serif;font-weight:bold;font-size:9.5px;line-height:9.5px;color:#1a1a1a;">8</div>
<div class="a " style="left:744.62px;top:518.41px;font-family:'Liberation Serif',serif;font-weight:bold;font-size:9.5px;line-height:9.5px;color:#1a1a1a;">2</div>
<div class="a " style="left:762.12px;top:518.41px;font-family:'Liberation Serif',serif;font-weight:bold;font-size:9.5px;line-height:9.5px;color:#1a1a1a;">0</div>
<div class="a " style="left:779.62px;top:518.41px;font-family:'Liberation Serif',serif;font-weight:bold;font-size:9.5px;line-height:9.5px;color:#1a1a1a;">1</div>
<div class="a " style="left:796.42px;top:518.41px;font-family:'Liberation Serif',serif;font-weight:bold;font-size:9.5px;line-height:9.5px;color:#1a1a1a;">7</div>
<div class="a" style="left:634px;top:71px;width:131px;height:28px;background:#fff;border:2px solid #e01010;box-sizing:border-box;border-radius:1px"></div>
<div class="a" style="left:636px;top:73px;width:10px;height:24px;background:#f0f0f0"></div>
<div class="a" style="left:636px;top:73px;width:127px;height:12px;background:#aed0f2;border:1px solid #7fb2e8;box-sizing:border-box"></div>
<div class="a " style="left:651.00px;top:75.00px;font-family:'Liberation Sans',sans-serif;font-weight:normal;font-size:7.6px;line-height:7.6px;color:#0a0a0a;letter-spacing:-0.045px;">За показниками з J0138106</div>
<div class="a " style="left:651.00px;top:87.00px;font-family:'Liberation Sans',sans-serif;font-weight:normal;font-size:7.6px;line-height:7.6px;color:#0a0a0a;letter-spacing:0.050px;">Заповнення ставки податку</div>
<div class="a" style="left:2px;top:542px;width:1022px;height:5px;background:#c6c6c6"></div>
<div class="a" style="left:2px;top:543px;width:1022px;height:1px;background:#e6e6e6"></div>
<div class="a" style="left:2px;top:546px;width:1022px;height:1px;background:#dcdcdc"></div>
<div class="a" style="left:2px;top:547px;width:1022px;height:8px;background:#f0f0f0"></div>
<div class="a" style="left:0px;top:0px;width:1px;height:555px;background:#9a9a9a"></div>
<div class="a" style="left:1px;top:0px;width:1px;height:555px;background:#e4e4e4"></div>
<div class="a" style="left:1px;top:89px;width:2px;height:458px;background:#fafafa"></div>
<div class="a" style="left:3px;top:89px;width:1px;height:453px;background:#909090"></div>
<div class="a" style="left:1025px;top:0px;width:1px;height:555px;background:#9a9a9a"></div>
<div class="a " style="left:2.90px;top:550.00px;font-family:'Liberation Sans',sans-serif;font-weight:normal;font-size:7.6px;line-height:7.6px;color:#0a0a0a;letter-spacing:-0.050px;">Рік 2025</div>
<div class="a " style="left:39.00px;top:550.00px;font-family:'Liberation Sans',sans-serif;font-weight:normal;font-size:7.5px;line-height:7.5px;color:#0a0a0a;">|</div>
<div class="a " style="left:48.00px;top:550.00px;font-family:'Liberation Sans',sans-serif;font-weight:normal;font-size:7.6px;line-height:7.6px;color:#0a0a0a;letter-spacing:-0.121px;">В ол з 2-ма дес знаками</div>
<div class="a " style="left:138.00px;top:550.00px;font-family:'Liberation Sans',sans-serif;font-weight:normal;font-size:7.5px;line-height:7.5px;color:#0a0a0a;">|</div>
<div class="a " style="left:146.20px;top:550.00px;font-family:'Liberation Sans',sans-serif;font-weight:normal;font-size:7.6px;line-height:7.6px;color:#0a0a0a;letter-spacing:0.063px;">Звіт &quot;Перевірений&quot; - без помилок</div>
<div class="a " style="left:272.50px;top:550.00px;font-family:'Liberation Sans',sans-serif;font-weight:normal;font-size:7.5px;line-height:7.5px;color:#0a0a0a;">|</div>
<div class="a " style="left:278.80px;top:550.00px;font-family:'Liberation Sans',sans-serif;font-weight:normal;font-size:7.6px;line-height:7.6px;color:#0a0a0a;letter-spacing:-0.005px;">Кількість сторінок 7</div>
<div class="a" style="left:348px;top:547px;width:1px;height:8px;background:#d8d8d8"></div>
<div class="a" style="left:0px;top:554px;width:1026px;height:1px;background:#9a9a9a"></div>
</body></html>
